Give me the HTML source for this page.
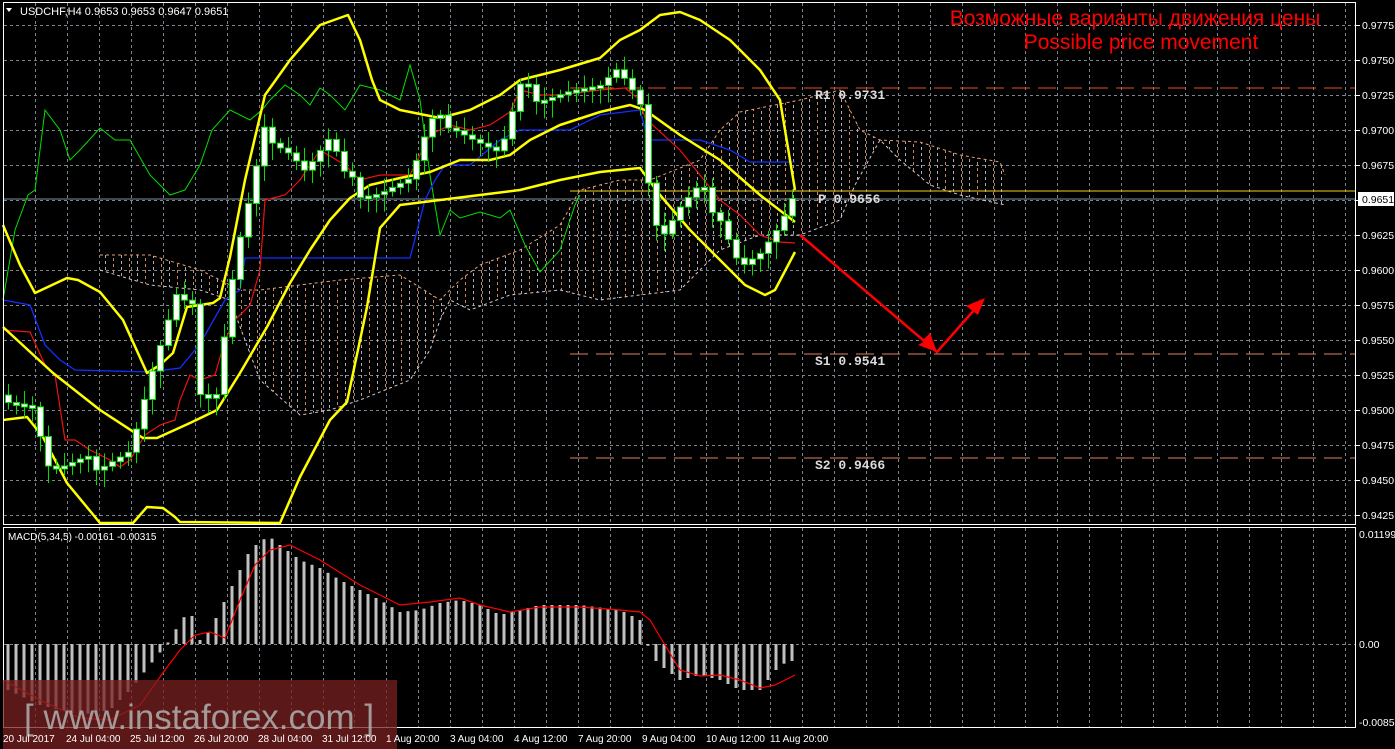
<!DOCTYPE html>
<html><head><meta charset="utf-8"><style>
html,body{margin:0;padding:0;background:#000;width:1395px;height:749px;overflow:hidden}
svg{display:block}
text{font-family:"Liberation Sans","DejaVu Sans",sans-serif}
</style></head><body>
<svg id="s" width="1395" height="749" viewBox="0 0 1395 749" xmlns="http://www.w3.org/2000/svg">
<defs>
<pattern id="hatch" width="16" height="6" patternUnits="userSpaceOnUse">
<rect x="1" y="0" width="1" height="3" fill="#c88a60"/>
<rect x="9" y="3" width="1" height="3" fill="#b8a8b0"/>
</pattern>
</defs>
<rect width="1395" height="749" fill="#000"/>
<g id="grid" stroke="#7a8590" stroke-width="1" stroke-dasharray="3,3"></g>
<polygon fill="url(#hatch)" points="100,255 150,255 200,270 240,290 260,290 300,285 340,280 400,275 440,300 460,280 480,265 520,250 560,225 580,190 620,180 650,180 700,160 720,130 740,112 800,100 840,90 860,130 880,140 920,142 960,155 1000,162 1005,175 1005,205 960,195 930,185 900,160 880,140 855,185 840,220 800,235 760,235 720,250 700,270 680,290 640,295 600,300 560,290 510,295 470,310 450,300 440,320 430,350 410,380 360,400 330,410 300,415 260,380 230,300 200,290 150,285 100,270"/>
<polyline fill="none" stroke="#e8a070" stroke-width="1" stroke-dasharray="3,3" points="100,255 150,255 200,270 240,290 260,290 300,285 340,280 400,275 440,300 460,280 480,265 520,250 560,225 580,190 620,180 650,180 700,160 720,130 740,112 800,100 840,90 860,130 880,140 920,142 960,155 1000,162 1005,175"/>
<polyline fill="none" stroke="#d8c8d0" stroke-width="1" stroke-dasharray="3,3" points="100,270 150,285 200,290 230,300 260,380 300,415 330,410 360,400 410,380 430,350 440,320 450,300 470,310 510,295 560,290 600,300 640,295 680,290 700,270 720,250 760,235 800,235 840,220 855,185 880,140 900,160 930,185 960,195 1005,205"/>
<line x1="570" y1="88" x2="1356" y2="88" stroke="#e0502a" stroke-dasharray="18,8"/>
<line x1="570" y1="354" x2="1356" y2="354" stroke="#e08060" stroke-dasharray="18,8"/>
<line x1="570" y1="458" x2="1356" y2="458" stroke="#e08060" stroke-dasharray="18,8"/>
<line x1="570" y1="191" x2="1356" y2="191" stroke="#f0d020"/>
<line x1="3" y1="199" x2="1356" y2="199" stroke="#8090a0"/>
<polyline fill="none" stroke="#00e000" stroke-width="1" points="3,300 15,230 28,195 35,190 45,110 60,130 70,160 80,150 100,128 115,140 130,140 150,175 170,195 185,190 200,165 212,130 230,110 250,120 262,110 270,100 285,85 300,95 310,105 320,88 330,95 345,110 360,85 380,90 400,100 410,65 420,100 430,175 440,235 450,210 460,218 480,212 500,218 510,210 525,245 540,272 560,250 575,205 580,195"/>
<polyline fill="none" stroke="#1030ff" stroke-width="1.3" points="3,300 30,305 45,345 60,360 75,370 150,372 180,368 195,350 205,335 225,300 240,290 245,258 345,258 410,258 425,200 435,180 445,165 470,165 500,140 520,130 570,130 600,115 640,110 648,140 700,140 730,150 750,162 795,162"/>
<polyline fill="none" stroke="#f01010" stroke-width="1.2" points="3,330 30,332 45,365 55,375 65,440 75,440 90,450 110,460 120,467 130,460 145,435 160,425 175,420 180,400 190,375 200,380 215,375 225,340 235,320 250,305 260,270 265,200 285,195 300,180 320,150 345,165 360,180 380,175 410,175 430,135 450,125 470,130 490,125 510,112 520,90 540,95 560,95 600,90 625,88 640,100 645,118 680,150 700,175 720,200 740,215 760,235 780,242 795,243"/>
<g fill="none" stroke="#ffff00" stroke-width="2.5" stroke-linejoin="round">
<polyline points="3,225 20,265 35,293 67,278 78,280 100,292 123,320 147,373 160,365 173,353 187,307 213,303 220,298 230,257 245,180 265,95 290,60 320,25 348,15 360,40 372,80 380,100 400,110 440,118 470,110 500,95 520,80 560,70 600,58 620,40 640,30 660,15 680,12 700,20 730,40 760,70 780,100 795,190"/>
<polyline points="3,327 53,373 100,410 143,438 157,438 190,423 217,410 240,373 267,327 290,283 310,250 330,220 350,198 370,185 400,178 430,172 460,160 490,160 510,155 530,140 560,125 600,112 630,105 645,110 680,135 720,160 760,195 795,222"/>
<polyline points="3,420 27,417 43,437 67,483 100,523 133,523 147,507 163,508 175,517 180,522 280,523 300,477 330,420 347,402 367,307 380,228 400,205 440,200 480,195 520,190 560,180 600,172 640,168 660,195 690,230 720,260 745,285 765,295 775,290 795,252"/>
</g>
<g id="candles"></g>
<g font-weight="bold" font-size="13" fill="#dcdcdc">
<text x="815" y="99" style="font-family:'Liberation Mono',monospace">R1 0.9731</text>
<text x="818" y="203" style="font-family:'Liberation Mono',monospace">P 0.9656</text>
<text x="815" y="365" style="font-family:'Liberation Mono',monospace">S1 0.9541</text>
<text x="815" y="469" style="font-family:'Liberation Mono',monospace">S2 0.9466</text>
</g>
<g stroke="#ff0000" stroke-width="2.5" fill="none">
<polyline points="800,235 937,352 983,300"/>
</g>
<polygon fill="#ff0000" points="937,352 918,345 931,338"/>
<polygon fill="#ff0000" points="937,352 922,341 930,333"/>
<polygon fill="#ff0000" points="985,298 966,306 978,315"/>
<text x="1135" y="25" font-size="21" fill="#ff0000" text-anchor="middle">Возможные варианты движения цены</text>
<text x="1141" y="49" font-size="21" fill="#ff0000" text-anchor="middle">Possible price movement</text>
<text x="20" y="15" font-size="11" fill="#fff">USDCHF,H4  0.9653 0.9653 0.9647 0.9651</text>
<polygon points="6,8 12,8 9,12" fill="#fff"/>
<g id="macd"></g>
<polyline fill="none" stroke="#ff0000" stroke-width="1.2" points="3,680 40,700 80,718 110,720 140,705 165,670 180,650 195,635 210,632 225,638 240,600 255,565 270,550 290,545 320,560 360,585 400,605 430,602 460,598 480,605 510,612 540,607 580,607 620,610 640,612 650,620 665,645 680,670 700,676 720,675 740,680 760,688 775,685 795,675"/>
<text x="8" y="540" font-size="10" fill="#fff">MACD(5,34,5) -0.00161 -0.00315</text>
<rect x="3.5" y="2.5" width="1352" height="522" fill="none" stroke="#fff"/>
<rect x="3.5" y="527.5" width="1352" height="200" fill="none" stroke="#fff"/>
<g font-size="10.5" fill="#fff" id="pax"></g>
<rect x="1358" y="192" width="36" height="14" fill="#fff"/>
<text x="1362" y="203" font-size="10.5" fill="#000">0.9651</text>
<text x="1359" y="538" font-size="10.5" fill="#fff">0.01199</text>
<text x="1359" y="648" font-size="10.5" fill="#fff">0.00</text>
<text x="1359" y="726" font-size="10.5" fill="#fff">-0.00856</text>
<rect x="3" y="680" width="394" height="69" fill="#7a2020" fill-opacity="0.75"/>
<text x="24" y="729" font-size="35" fill="#b0b0b0" fill-opacity="0.85">[ www.instaforex.com ]</text>
<g font-size="10" fill="#fff" id="tax">
<text x="3" y="742">20 Jul 2017</text>
<text x="66" y="742">24 Jul 04:00</text>
<text x="130" y="742">25 Jul 12:00</text>
<text x="194" y="742">26 Jul 20:00</text>
<text x="258" y="742">28 Jul 04:00</text>
<text x="322" y="742">31 Jul 12:00</text>
<text x="386" y="742">1 Aug 20:00</text>
<text x="450" y="742">3 Aug 04:00</text>
<text x="514" y="742">4 Aug 12:00</text>
<text x="578" y="742">7 Aug 20:00</text>
<text x="642" y="742">9 Aug 04:00</text>
<text x="706" y="742">10 Aug 12:00</text>
<text x="770" y="742">11 Aug 20:00</text>
</g>
</svg>
<script>
(function(){
var NS="http://www.w3.org/2000/svg";
function el(p,t,a){var e=document.createElementNS(NS,t);for(var k in a)e.setAttribute(k,a[k]);p.appendChild(e);return e;}
function interp(pts,x){for(var i=0;i<pts.length-1;i++){if(x<=pts[i+1][0]){var a=pts[i],b=pts[i+1];return a[1]+(b[1]-a[1])*(x-a[0])/(b[0]-a[0]);}}return pts[pts.length-1][1];}
var g=document.getElementById("grid");
for(var x=35;x<1356;x+=31.95){el(g,"line",{x1:Math.round(x)+.5,y1:3,x2:Math.round(x)+.5,y2:524});el(g,"line",{x1:Math.round(x)+.5,y1:528,x2:Math.round(x)+.5,y2:727});}
for(var y=25;y<=515;y+=35){el(g,"line",{x1:4,y1:y+.5,x2:1355,y2:y+.5});}
el(g,"line",{x1:4,y1:644.5,x2:1355,y2:644.5});
var pax=document.getElementById("pax");
var vals=["0.9775","0.9750","0.9725","0.9700","0.9675","","0.9625","0.9600","0.9575","0.9550","0.9525","0.9500","0.9475","0.9450","0.9425"];
for(var i=0;i<vals.length;i++){if(vals[i]){var t=el(pax,"text",{x:1362,y:25+35*i+4});t.textContent=vals[i];}el(pax,"line",{x1:1356,y1:25+35*i+.5,x2:1360,y2:25+35*i+.5,stroke:"#fff"});}
var cp=[[8,395],[35,405],[45,465],[60,470],[80,465],[100,462],[130,450],[150,380],[180,290],[195,300],[200,390],[215,400],[235,260],[250,200],[265,130],[290,150],[305,170],[330,140],[345,180],[360,190],[380,190],[410,180],[430,125],[450,120],[470,135],[500,155],[520,90],[540,95],[570,90],[600,90],[625,70],[640,100],[650,200],[660,240],[680,210],[700,190],[720,215],[740,265],[760,255],[780,230],[795,200]];
var cg=document.getElementById("candles");
var prev=interp(cp,8);
for(var x=8;x<=795;x+=8){var c=interp(cp,x)+((x*37)%11-5)*1.5;var tp=Math.min(prev,c),bt=Math.max(prev,c);if(bt-tp<3){bt=tp+3;}
el(cg,"line",{x1:x+.5,y1:tp-5-(x%5)*2,x2:x+.5,y2:bt+5+(x%7)*2,stroke:"#00e000"});
el(cg,"rect",{x:x-2.5,y:tp,width:6,height:bt-tp,fill:"#fff",stroke:"#00e000","stroke-width":1});prev=c;}
var mp=[[8,690],[40,705],[80,715],[110,710],[130,690],[150,665],[162,650],[170,640],[180,622],[190,610],[200,640],[210,630],[220,610],[230,590],[240,570],[250,550],[262,540],[270,537],[280,545],[300,560],[320,568],[340,580],[360,590],[380,600],[400,612],[420,610],[440,603],[460,600],[480,605],[500,615],[520,610],[540,605],[580,605],[620,610],[640,620],[645,632],[650,655],[660,665],[680,680],[700,675],[720,680],[740,690],[760,690],[780,665],[795,660]];
var mg=document.getElementById("macd");
for(var x=8;x<=795;x+=8){var v=interp(mp,x);var a=Math.min(v,644),b=Math.max(v,644);el(mg,"rect",{x:x-1.5,y:a,width:3,height:Math.max(1,b-a),fill:"#c0c0c0"});}
})();
</script>
</body></html>
